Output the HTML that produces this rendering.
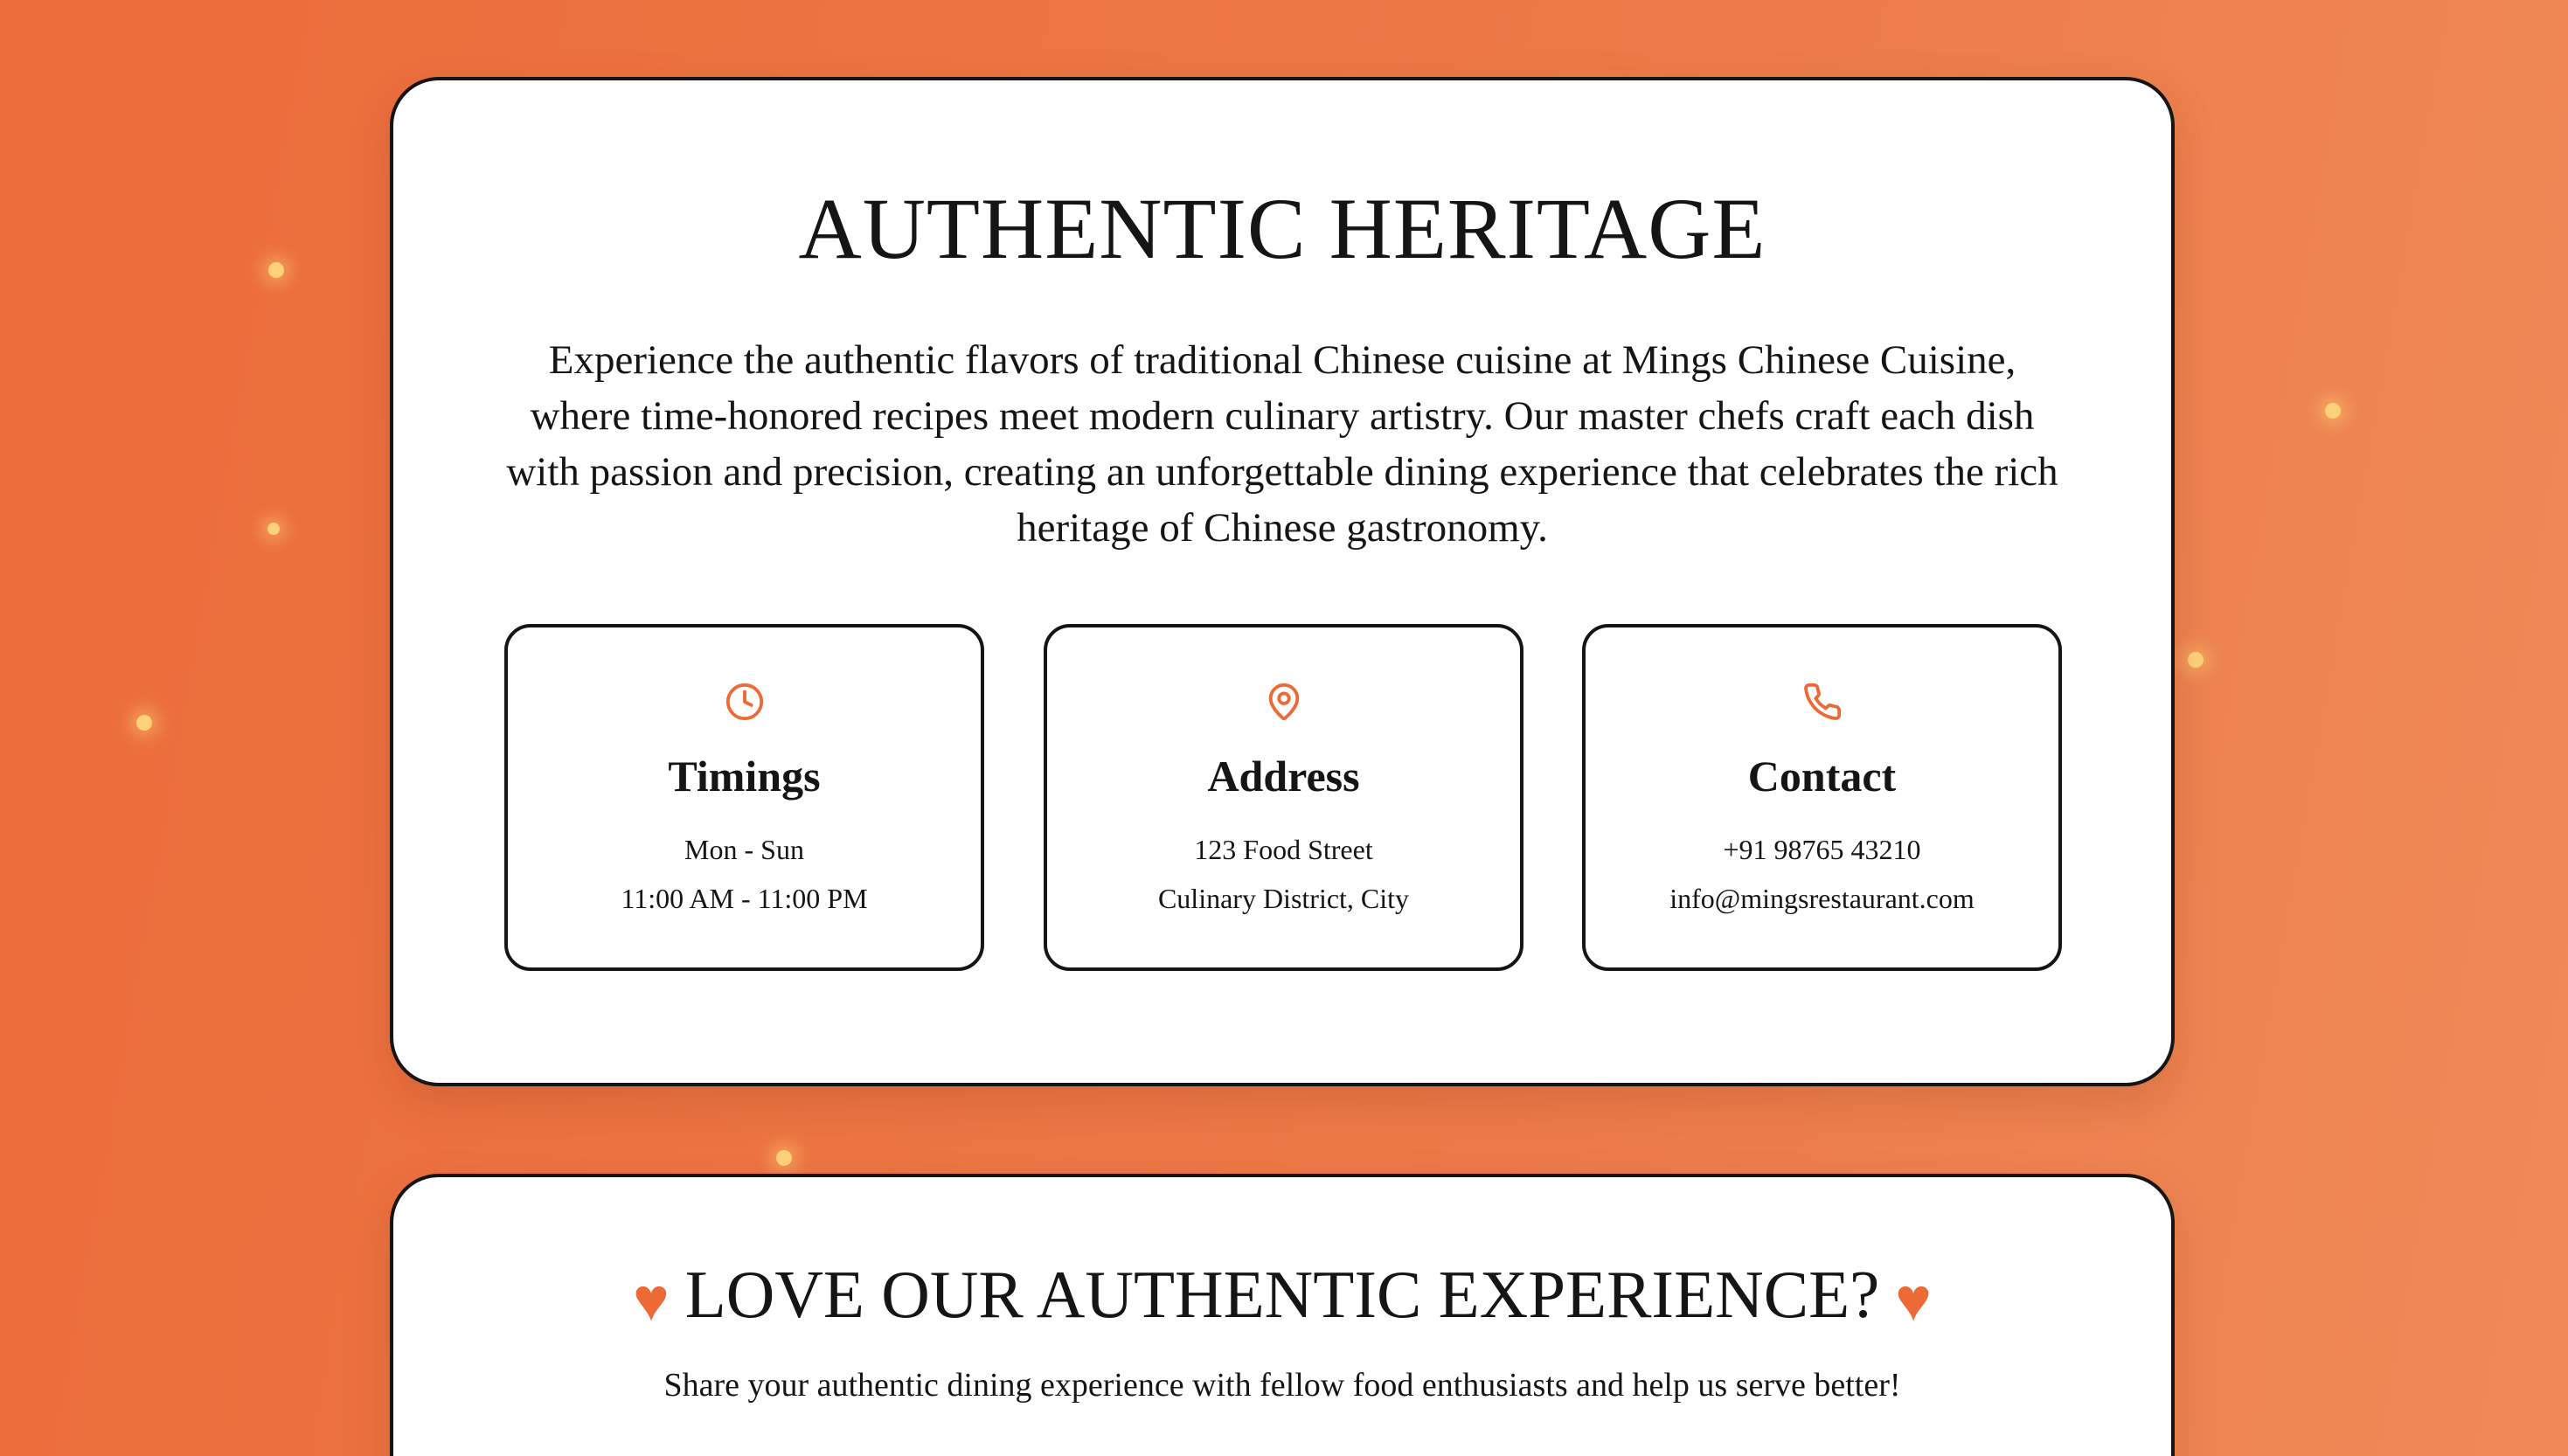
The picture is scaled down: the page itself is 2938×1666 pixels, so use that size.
<!DOCTYPE html>
<html><head><meta charset="utf-8"><style>
*{margin:0;padding:0;box-sizing:border-box}
html,body{width:2938px;height:1666px;overflow:hidden}
body{font-family:"Liberation Serif",serif;color:#151515}
#w{position:relative;width:2938px;height:1666px;overflow:hidden;background:linear-gradient(100deg,#ec6c3b 0%,#ed7a48 60%,#ef8a58 100%)}
.dot{position:absolute;width:18px;height:18px;border-radius:50%;background:#ffd27a;box-shadow:0 0 18px 8px rgba(255,210,120,.45)}
.card{position:absolute;left:446px;width:2042px;background:#fff;border:4px solid #151515;border-radius:56px;box-shadow:0 20px 50px rgba(120,40,10,.18)}
h1{position:absolute;top:120px;left:0;right:0;text-align:center;font-size:100px;font-weight:normal;letter-spacing:1px;line-height:1}
.p{position:absolute;top:288px;left:0;right:0;text-align:center;font-size:47px;line-height:64px;white-space:nowrap}
.box{position:absolute;top:622px;width:549px;height:397px;border:4px solid #151515;border-radius:30px;text-align:center}
.box svg{position:absolute;top:62px;left:50%;margin-left:-23px}
.box h3{position:absolute;top:145px;left:0;right:0;font-size:50px;font-weight:bold;line-height:1}
.box .l{position:absolute;left:0;right:0;font-size:32px;line-height:1}
h2{position:absolute;top:96px;left:0;right:0;text-align:center;font-size:77px;font-weight:normal;line-height:1;white-space:nowrap}
.heart{color:#ec6a36;font-size:70px;vertical-align:middle;margin:0 18px}
.sub{position:absolute;top:216px;left:0;right:0;text-align:center;font-size:38px}
</style></head><body><div id="w">
<div class="dot" style="left:307px;top:300px"></div>
<div class="dot" style="left:306px;top:598px;width:14px;height:14px"></div>
<div class="dot" style="left:156px;top:818px"></div>
<div class="dot" style="left:888px;top:1316px"></div>
<div class="dot" style="left:2660px;top:461px"></div>
<div class="dot" style="left:2503px;top:746px"></div>

<div class="card" style="top:88px;height:1155px">
<h1>AUTHENTIC HERITAGE</h1>
<div class="p">Experience the authentic flavors of traditional Chinese cuisine at Mings Chinese Cuisine,<br>where time-honored recipes meet modern culinary artistry. Our master chefs craft each dish<br>with passion and precision, creating an unforgettable dining experience that celebrates the rich<br>heritage of Chinese gastronomy.</div>

<div class="box" style="left:127px">
<svg width="46" height="46" viewBox="0 0 24 24" fill="none" stroke="#ec6a36" stroke-width="2" stroke-linecap="round" stroke-linejoin="round"><circle cx="12" cy="12" r="10"/><path d="M12 6v6l4 2"/></svg>
<h3>Timings</h3>
<div class="l" style="top:238px">Mon - Sun</div>
<div class="l" style="top:294px">11:00 AM - 11:00 PM</div>
</div>
<div class="box" style="left:744px">
<svg width="46" height="46" viewBox="0 0 24 24" fill="none" stroke="#ec6a36" stroke-width="2" stroke-linecap="round" stroke-linejoin="round"><path d="M20 10c0 5-5.5 10.2-7.4 11.8a1 1 0 0 1-1.2 0C9.5 20.2 4 15 4 10a8 8 0 0 1 16 0"/><circle cx="12" cy="10" r="3"/></svg>
<h3>Address</h3>
<div class="l" style="top:238px">123 Food Street</div>
<div class="l" style="top:294px">Culinary District, City</div>
</div>
<div class="box" style="left:1360px">
<svg width="46" height="46" viewBox="0 0 24 24" fill="none" stroke="#ec6a36" stroke-width="2" stroke-linecap="round" stroke-linejoin="round"><path d="M22 16.9v3a2 2 0 0 1-2.2 2 19.8 19.8 0 0 1-8.6-3.1 19.5 19.5 0 0 1-6-6A19.8 19.8 0 0 1 2.1 4.2 2 2 0 0 1 4.1 2h3a2 2 0 0 1 2 1.7c.1.9.4 1.9.7 2.8a2 2 0 0 1-.5 2.1L8 9.9a16 16 0 0 0 6 6l1.3-1.3a2 2 0 0 1 2.1-.4c.9.3 1.8.6 2.8.7a2 2 0 0 1 1.7 2z"/></svg>
<h3>Contact</h3>
<div class="l" style="top:238px">+91 98765 43210</div>
<div class="l" style="top:294px">info@mingsrestaurant.com</div>
</div>
</div>

<div class="card" style="top:1343px;height:400px">
<h2><span class="heart">♥</span>LOVE OUR AUTHENTIC EXPERIENCE?<span class="heart">♥</span></h2>
<div class="sub">Share your authentic dining experience with fellow food enthusiasts and help us serve better!</div>
</div>
</div></body></html>
